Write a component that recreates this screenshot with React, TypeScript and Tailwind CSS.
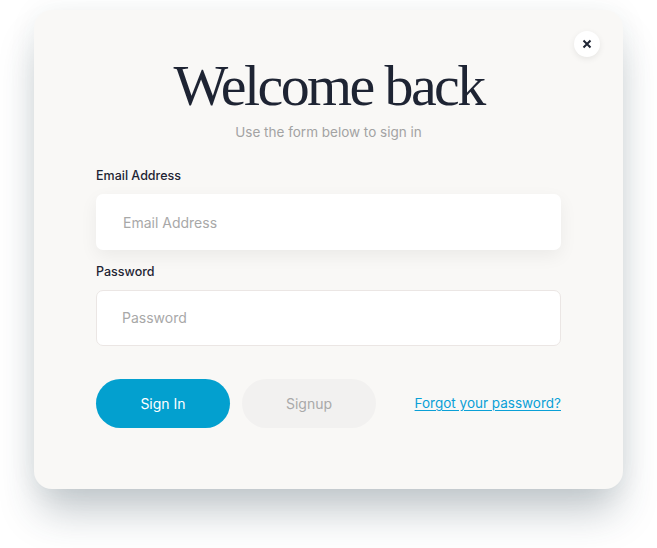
import { useState } from "react";

export default function App() {
  const [email, setEmail] = useState("");
  const [password, setPassword] = useState("");

  return (
    <div className="w-full min-h-screen bg-white pt-[10px] pl-[34px] font-['Inter',sans-serif]">
      <div className="relative w-[589px] h-[479px] rounded-[18px] bg-[#f9f8f6] shadow-[0_28px_40px_-6px_rgba(40,60,75,0.28),0_0_30px_rgba(40,60,75,0.06)] px-[62px] pt-[46px]">
        {/* Close */}
        <button className="absolute top-[21px] right-[23px] w-[26px] h-[26px] rounded-full bg-white shadow-[0_2px_6px_rgba(0,0,0,0.08)] flex items-center justify-center">
          <svg className="w-[10px] h-[10px]" viewBox="0 0 10 10" fill="none" stroke="#1f2533" strokeWidth={2}>
            <path d="M1.5 1.5l7 7M8.5 1.5l-7 7" />
          </svg>
        </button>

        <h1 className="text-center text-[#1e2433] text-[58px] leading-[60px] tracking-[-0.045em] font-['Liberation_Serif',serif]">
          Welcome back
        </h1>
        <p className="mt-[6px] text-center text-[13.5px] text-[#a3a3a3]">Use the form below to sign in</p>

        {/* Email */}
        <label className="block mt-[25px] text-[12.5px] font-medium text-[#1e2433]">Email Address</label>
        <input
          value={email}
          onChange={(e) => setEmail(e.target.value)}
          placeholder="Email Address"
          className="mt-[8px] w-full h-[56px] rounded-[7px] bg-white px-[27px] text-[14px] text-[#1e2433] placeholder-[#a8a8a8] outline-none shadow-[0_6px_18px_rgba(0,0,0,0.06)]"
        />

        {/* Password */}
        <label className="block mt-[13px] text-[12.5px] font-medium text-[#1e2433]">Password</label>
        <input
          type="password"
          value={password}
          onChange={(e) => setPassword(e.target.value)}
          placeholder="Password"
          className="mt-[8px] w-full h-[56px] rounded-[7px] bg-white border border-[#ebe6e4] px-[25px] text-[14px] text-[#1e2433] placeholder-[#a8a8a8] outline-none"
        />

        {/* Actions */}
        <div className="mt-[33px] flex items-center">
          <button className="w-[134px] h-[49px] rounded-full bg-[#03a0cf] text-white text-[14px]">Sign In</button>
          <button className="ml-[12px] w-[134px] h-[49px] rounded-full bg-[#f2f1f0] text-[#a9a9a9] text-[14px]">Signup</button>
          <a href="#" className="ml-auto text-[13.5px] text-[#0aa0d6] underline underline-offset-2">
            Forgot your password?
          </a>
        </div>
      </div>
    </div>
  );
}
